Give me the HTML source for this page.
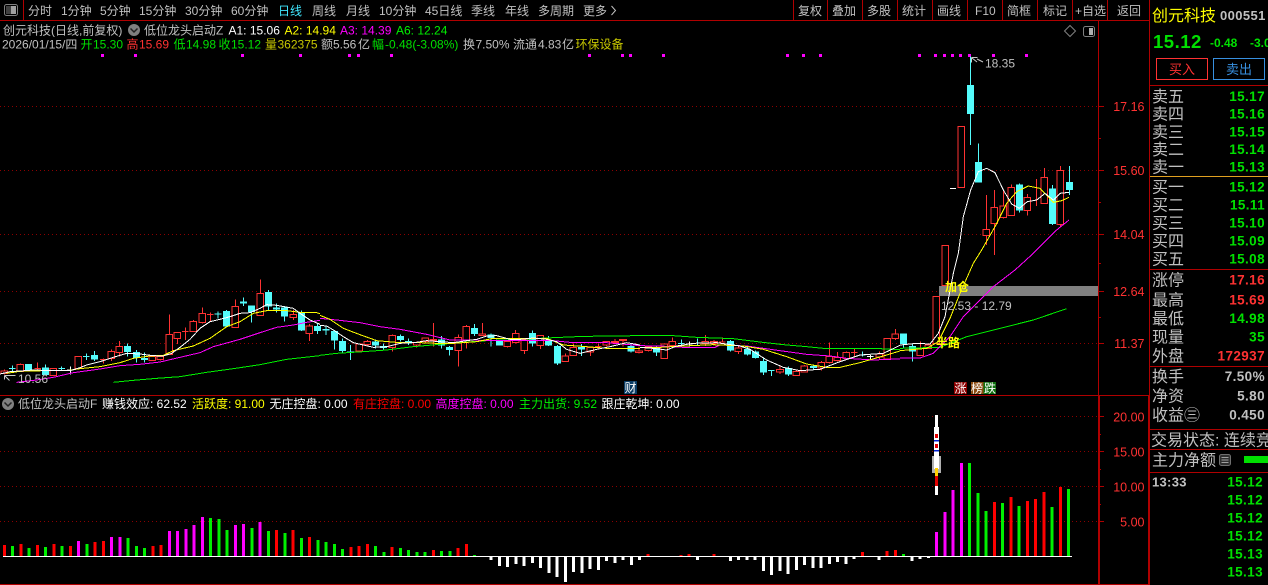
<!DOCTYPE html>
<html><head><meta charset="utf-8"><title>创元科技</title>
<style>
html,body{margin:0;padding:0;background:#000;width:1268px;height:585px;overflow:hidden}
svg{display:block;position:absolute;left:0;top:0}
text{font-family:"Liberation Sans","WenQuanYi Zen Hei","Noto Sans CJK SC",sans-serif;font-size:12px;fill:#c0c0c0;white-space:pre}
.y{fill:#ffff00}.g{fill:#00e000}.r{fill:#ff3232}.m{fill:#ff00ff}.w{fill:#fff}.o{fill:#c8c800}
.pure{fill:#ff0000}.pg{fill:#00f000}
.l{font-size:16px}.v{font-size:13.5px;font-weight:bold;text-anchor:end;letter-spacing:.4px}
.ax{fill:#ff3232;text-anchor:end;font-size:12.5px}
.f{fill:none}
.cr{fill:#000;stroke:#ff3232;stroke-width:3}
.wr{fill:none;stroke:#ff3232;stroke-width:3}
.cb{fill:none;stroke:#54fcfc;stroke-width:21}
.wc{fill:none;stroke:#54fcfc;stroke-width:3}
.ww{fill:none;stroke:#fff;stroke-width:3}
.L{fill:none;stroke-width:3;stroke-linejoin:round}
</style></head><body>
<svg width="1268" height="585" viewBox="0 0 1268 585" xmlns="http://www.w3.org/2000/svg">
<rect width="1268" height="585" fill="#000"/>

<!-- grid -->
<g shape-rendering="crispEdges" stroke="#8c0000" stroke-dasharray="1 3" fill="none">
<path d="M0 106.5H1098M0 170.5H1098M0 234.5H1098M0 291.5H1098M0 343.5H1098M0 416.5H1098M0 451.5H1098M0 486.5H1098M0 521.5H1098"/>
</g>

<!-- magenta dots -->
<path shape-rendering="crispEdges" fill="#ff00ff" d="M101 54h3v3h-3zM134 54h3v3h-3zM241 54h3v3h-3zM299 54h3v3h-3zM348 54h3v3h-3zM357 54h3v3h-3zM390 54h3v3h-3zM588 54h3v3h-3zM621 54h3v3h-3zM629 54h3v3h-3zM662 54h3v3h-3zM786 54h3v3h-3zM802 54h3v3h-3zM819 54h3v3h-3zM918 54h3v3h-3zM934 54h3v3h-3zM943 54h3v3h-3zM951 54h3v3h-3zM959 54h3v3h-3zM968 54h3v3h-3zM992 54h3v3h-3zM1025 54h3v3h-3z"/>

<!-- candles i0-38 -->
<g transform="translate(0,270) scale(.33333)" shape-rendering="crispEdges">
<path class="wr" d="M13 298V313M61 280V283M113 277V298M310 265V280M334 238V273M358 213V260M481 255V272M508 133V255M532 206V222M556 172V210M580 150V186M607 112V160M631 128V155M706 88V174M781 28V138M880 120V150M928 162V213"/>
<path class="cr" d="M3 303h20v8h-20zM51 283h20v22h-20zM103 296h20M150 296h20v21h-20zM225 259h20v37h-20zM300 268h20M324 244h20v22h-20zM348 229h20v19h-20zM447 259h20v13h-20zM471 259h20v9h-20zM498 193h20v60h-20zM522 187h20v19h-20zM546 184h20M570 154h20v30h-20zM597 130h20v27h-20zM621 133h20M696 109h20v63h-20zM771 70h20v67h-20zM870 133h20v10h-20zM918 168h20v23h-20z"/>
<path class="wc" d="M37 286V305M27 296h20M136 283V315M185 290V303M175 296h20M259 250V270M249 259h20M283 243V273M382 220V260M409 240V277M433 247V277M654 124V145M644 132h20M679 120V173M730 82V108M754 106V158M805 60V120M829 100V128M853 108V155M904 122V183M952 160V192"/>
<path class="cb" d="M85 282V303M136 292V315M283 255V268M382 228V246M409 246V264M433 264V270M679 123V170M730 94V101M754 106V126M805 66V110M829 113V118M853 113V140M904 128V182M952 168V183"/>
<path class="ww" d="M211 290V313M201 300h20"/>
</g>

<!-- candles i39-77 -->
<g transform="translate(320,300) scale(.33333)" shape-rendering="crispEdges">
<path class="wr" d="M118 130V155M142 120V138M217 103V155M290 125V143M316 112V127M340 69V140M415 103V200M439 75V145M487 69V108M562 118V142M587 90V130M613 115V162M661 105V147M736 160V186M760 130V168M811 142V168M835 130V145M825 140h20M859 124V140M885 117V134M909 118V140M957 140V160"/>
<path class="cr" d="M108 132h20v21h-20zM132 125h20v9h-20zM207 106h20v37h-20zM280 128h20v7h-20zM306 114h20v10h-20zM330 118h20v4h-20zM405 112h20v39h-20zM429 79h20v41h-20zM477 102h20v4h-20zM552 124h20v16h-20zM577 100h20v28h-20zM603 120h20v31h-20zM651 106h20v30h-20zM726 168h20v17h-20zM750 142h20v24h-20zM801 142h20v14h-20zM849 125h20v10h-20zM875 125h20v3h-20zM899 118h20v4h-20zM947 153h20v5h-20z"/>
<path class="wc" d="M18 80V105M43 90V148M67 115V158M92 135V180M166 118V145M190 130V150M241 103V124M265 115V135M364 108V145M388 138V167M463 72V108M513 100V140M637 92V140M685 108V138M712 135V195M784 132V168M933 130V158"/>
<path class="cb" d="M18 87V92M43 93V122M67 123V153M92 154V159M166 124V137M190 138V144M241 108V120M265 123V130M364 118V137M388 141V150M463 84V102M513 104V114M538 118V136M637 99V131M685 120V137M712 138V191M784 141V149M933 138V155"/>
</g>

<!-- candles i78-112 -->
<g transform="translate(640,310) scale(.33333)" shape-rendering="crispEdges">
<path class="wr" d="M25 108V125M97 82V110M196 75V108M222 90V108M247 82V98M295 110V132M420 168V192M469 178V198M493 165V188M544 153V182M568 97V160M592 126V154M619 125V150M643 117V140M718 125V150M766 57V90M841 94V136M865 100V115"/>
<path class="cr" d="M15 111h20v11h-20zM63 102h20v44h-20zM87 94h20v13h-20zM186 94h20v6h-20zM212 94h20v6h-20zM237 96h20M285 114h20v11h-20zM410 178h20v8h-20zM459 185h20v12h-20zM483 168h20v18h-20zM534 157h20v17h-20zM558 139h20v19h-20zM582 142h20v10h-20zM609 127h20v18h-20zM633 128h20M708 132h20v9h-20zM732 85h20v62h-20zM756 72h20v14h-20zM831 115h20v21h-20zM855 105h20v10h-20z"/>
<path class="wc" d="M49 108V138M124 88V108M114 101h20M172 85V108M271 90V125M322 110V136M346 122V146M370 142V195M394 180V198M384 182h20M445 170V198M520 166V178M667 124V140M657 135h20M790 102V112M817 100V155"/>
<path class="cb" d="M49 112V128M271 93V122M322 117V134M346 124V144M370 153V188M445 174V194M520 168V174M790 70V102M817 108V125"/>
<path class="ww" d="M148 95V110M138 102h20M691 135V147M681 140h20"/>
</g>

<!-- candles i113-129 -->
<g transform="translate(900,230) scale(.33333)" shape-rendering="crispEdges">
<path class="cr" d="M99 199h20v141h-20zM126 46h20v121h-20z"/>
</g>
<g transform="translate(900,50) scale(.33333)" shape-rendering="crispEdges">
<path class="wr" d="M259 435V585M283 420V615M310 422V505M334 403V497M382 432V497M409 387V468M433 354V460M481 348V530"/>
<path class="cr" d="M174 229h20v183h-20zM249 538h20v18h-20zM273 472h20v48h-20zM300 468h20v35h-20zM324 412h20v85h-20zM372 442h20v40h-20zM423 382h20v78h-20zM471 361h20v162h-20z"/>
<path class="wc" d="M211 20V285M235 280V398M358 400V488M457 405V525M508 348V435"/>
<path class="cb" d="M211 105V192M235 336V398M358 403V482M457 415V522M508 396V420"/>
<path class="ww" d="M150 415h18"/>
</g>

<!-- band -->
<rect x="939" y="286" width="159" height="10" fill="#808080" shape-rendering="crispEdges"/>

<!-- MA lines -->
<g transform="translate(0,270) scale(.33333)" shape-rendering="crispEdges">
<polyline class="L" stroke="#00f000" points="340,337 400,331 470,325 540,320 620,307 700,296 780,284 860,268 960,257"/>
<polyline class="L" stroke="#ff00ff" points="50,337 110,330 160,322 220,308 300,297 360,287 420,283 480,276 540,262 600,248 640,230 720,208 780,188 830,172 880,165 920,157 960,151"/>
<polyline class="L" stroke="#ffff00" points="20,310 60,304 130,302 200,302 240,296 300,290 360,278 400,265 450,258 490,256 520,242 580,228 630,205 680,170 720,155 760,130 800,122 860,122 900,127 950,128 960,131"/>
<polyline class="L" stroke="#ffffff" points="0,312 30,305 60,303 100,300 160,302 210,302 240,293 260,285 300,275 340,262 380,250 420,252 460,257 490,258 515,250 540,232 570,208 600,175 630,155 660,148 690,140 720,130 750,128 780,115 800,104 830,106 880,115 900,130 930,150 960,163"/>
</g>
<g transform="translate(320,300) scale(.33333)" shape-rendering="crispEdges">
<polyline class="L" stroke="#00f000" points="0,166 50,160 130,155 200,150 280,140 360,133 430,127 500,122 600,118 700,113 770,110 850,108 960,107"/>
<polyline class="L" stroke="#ff00ff" points="0,55 50,60 120,68 180,80 240,88 320,103 390,120 440,120 530,122 620,122 700,122 760,128 860,128 960,137"/>
<polyline class="L" stroke="#ffff00" points="0,46 30,58 70,85 120,104 170,122 240,128 300,128 350,130 400,130 470,125 520,115 590,115 680,115 730,135 800,140 860,145 930,145 960,145"/>
<polyline class="L" stroke="#ffffff" points="0,76 20,78 40,90 70,110 100,128 130,135 160,142 200,140 240,130 290,127 320,122 360,125 400,128 440,122 470,118 500,108 530,107 570,118 600,118 640,114 680,118 710,125 740,148 780,160 830,148 870,140 920,128 960,135"/>
</g>
<g transform="translate(640,310) scale(.33333)" shape-rendering="crispEdges">
<polyline class="L" stroke="#00f000" points="0,76 100,77 170,82 280,86 360,96 430,104 500,110 550,115 700,115 760,118 780,118"/>
<polyline class="L" stroke="#ff00ff" points="0,107 60,108 130,112 225,112 240,105 320,108 420,122 500,133 570,138 620,145 700,150 770,147 780,147"/>
<polyline class="L" stroke="#ffff00" points="0,112 60,112 130,108 220,104 310,108 370,118 440,140 500,162 560,172 600,172 660,158 740,135 780,123"/>
<polyline class="L" stroke="#ffffff" points="0,112 40,115 80,120 110,108 160,100 230,98 300,108 330,118 380,150 430,172 480,182 540,178 600,155 660,135 730,130 780,106"/>
</g>
<g transform="translate(900,230) scale(.33333)" shape-rendering="crispEdges">
<polyline class="L" stroke="#00f000" points="0,355 120,352 200,320 300,295 400,270 500,236"/>
<polyline class="L" stroke="#ff00ff" points="0,384 60,384 100,370 150,320 190,260 280,170 345,120 400,70"/>
<polyline class="L" stroke="#ffff00" points="0,362 80,355 115,335 150,265 180,190 220,100 245,60"/>
<polyline class="L" stroke="#ffffff" points="0,345 50,340 90,342 115,310 135,260 160,130 175,70"/>
</g>
<g transform="translate(900,50) scale(.33333)" shape-rendering="crispEdges">
<polyline class="L" stroke="#ff00ff" points="400,610 470,540 507,510"/>
<polyline class="L" stroke="#ffff00" points="245,600 285,530 320,460 350,425 385,408 420,415 460,457 485,452 507,442"/>
<polyline class="L" stroke="#ffffff" points="175,610 190,500 212,420 235,365 260,355 285,368 310,420 335,462 358,475 382,455 410,450 435,430 460,450 480,430 507,427"/>
</g>

<!-- chart labels -->
<path fill="none" stroke="#c8c8c8" d="M971.5 57.5h6M971.5 57.5v5M972 58l5 4M977 59l6 3"/>
<text x="985" y="67.5">18.35</text>
<path fill="none" stroke="#c8c8c8" d="M4.5 375.5h11M4.5 375.5v4M4.5 375.5l5 5"/>
<text x="18" y="383">10.56</text>
<text x="945" y="291" class="y" style="font-size:12px;font-weight:bold">加仓</text>
<text x="941" y="310">12.53 - 12.79</text>
<text x="936" y="347" class="y" style="font-size:12px;font-weight:bold">半路</text>
<rect x="624" y="381" width="13" height="13" fill="#0a3c64"/><text x="624.5" y="392" class="w">财</text>
<rect x="954" y="382" width="13" height="12" fill="#8b0000"/><text x="954.5" y="392.5" class="w">涨</text>
<rect x="971" y="382" width="12.5" height="12" fill="#8b4a10"/><text x="971" y="392.5" class="w">榜</text>
<rect x="983.5" y="382" width="12.5" height="12" fill="#107010"/><text x="984" y="392.5" class="w">跌</text>

<!-- lower bars -->
<g transform="translate(0,390) scale(1,.33333)" fill="none" stroke-width="3" shape-rendering="crispEdges">
<path stroke="#ff0000" d="M4.3 498V465M20.8 498V462M37.3 498V465M53.8 498V462M70.3 498V468M95 498V456M103.3 498V453M152.8 498V468M161 498V465M276.5 498V420M293 498V420M309.5 498V441M350.8 498V471M359 498V468M367.3 498V462M392 498V471M433.3 498V480M458 498V474M466.3 498V462"/>
<path stroke="#00f000" d="M12.5 498V468M29 498V474M45.5 498V471M62 498V468M86.8 498V462M128 498V444M136.3 498V468M144.5 498V474M210.5 498V384M218.8 498V387M227 498V420M251.8 498V414M268.3 498V423M284.8 498V429M301.3 498V444M317.8 498V450M326 498V456M334.3 498V462M342.5 498V477M375.5 498V468M383.8 498V486M400.3 498V474M408.5 498V480M416.8 498V486M425 498V486M441.5 498V483M449.8 498V483M474.5 498V495"/>
<path stroke="#ff00ff" d="M78.5 498V453M111.5 498V441M119.8 498V441M169.3 498V423M177.5 498V423M185.8 498V417M194 498V405M202.3 498V381M235.3 498V405M243.5 498V402M260 498V396"/>
<path stroke="#ffffff" d="M491 498V510M499.3 498V528M507.5 498V531M515.8 498V522M524 498V528M532.3 498V519M540.5 498V534M548.8 498V549M557 498V561"/>
</g>
<g transform="translate(0,400) scale(1,.33333)" fill="none" stroke-width="3" shape-rendering="crispEdges">
<path stroke="#ffffff" d="M565.3 468V546M573.5 468V516M581.8 468V519M590 468V507M598.3 468V510M606.5 468V483M614.8 468V489M623 468V480M631.3 468V495M639.5 468V480M697.3 468V480M730.3 468V483M738.5 468V480M746.8 468V480M755 468V480M763.3 468V513M771.5 468V525M779.8 468V513M788 468V522M796.3 468V510M804.5 468V495M812.8 468V504M821 468V504M829.3 468V492M837.5 468V486M845.8 468V492M854 468V477M878.8 468V480M911.8 468V483M920 468V477M928.3 468V474"/>
<path stroke="#ff0000" d="M647.8 468V462M680.8 468V465M689 468V462M713.8 468V462M862.3 468V456M887 468V453M895.3 468V450M994.3 468V306M1010.8 468V291M1027.3 468V303M1035.5 468V297M1043.8 468V276M1060.3 468V261"/>
<path stroke="#00f000" d="M903.5 468V462M969.5 468V189M977.8 468V279M986 468V333M1002.5 468V309M1019 468V318M1052 468V321M1068.5 468V267"/>
<path stroke="#ff00ff" d="M936.5 468V396M944.8 468V336M953 468V270M961.3 468V189"/>
</g>
<rect x="3" y="556" width="1069" height="1" fill="#fff" shape-rendering="crispEdges"/>

<!-- rocket -->
<g shape-rendering="crispEdges">
<rect x="935" y="415" width="3" height="80" fill="#fff"/>
<rect x="932" y="456" width="9" height="17" fill="#b0b0b0"/>
<rect x="934" y="427" width="5" height="42" fill="#fff"/>
<rect x="935" y="434" width="3" height="4" fill="#e00000"/>
<rect x="934" y="440" width="5" height="1.5" fill="#0020d0"/>
<rect x="935" y="444" width="3" height="4" fill="#e00000"/>
<rect x="934" y="450" width="5" height="1.5" fill="#0020d0"/>
<rect x="935" y="468" width="3" height="8" fill="#ffd000"/>
<rect x="935" y="476" width="3" height="10" fill="#e00000"/>
</g>

<!-- frame lines -->
<g shape-rendering="crispEdges" fill="#b00000">
<rect x="0" y="20" width="1150" height="1"/>
<rect x="23" y="0" width="1" height="20"/>
<rect x="793" y="0" width="1" height="20"/><rect x="827" y="0" width="1" height="20"/><rect x="862" y="0" width="1" height="20"/><rect x="897" y="0" width="1" height="20"/><rect x="932" y="0" width="1" height="20"/><rect x="967" y="0" width="1" height="20"/><rect x="1002" y="0" width="1" height="20"/><rect x="1037" y="0" width="1" height="20"/><rect x="1072" y="0" width="1" height="20"/><rect x="1107" y="0" width="1" height="20"/>
<rect x="1098" y="21" width="1" height="374"/>
<rect x="1098" y="395" width="2" height="190"/>
<rect x="0" y="395" width="1150" height="1"/>
<rect x="0" y="584" width="1150" height="1"/>
<rect x="1149" y="0" width="1" height="395"/>
<rect x="1148" y="395" width="2" height="190"/>
<rect x="1150" y="85" width="118" height="1"/>
<rect x="1150" y="269" width="118" height="1"/>
<rect x="1150" y="366" width="118" height="1"/>
<rect x="1150" y="429" width="118" height="1"/>
<rect x="1150" y="449" width="118" height="1"/>
<rect x="1150" y="472" width="118" height="1"/>
<rect x="1150" y="176" width="118" height="1" fill="#e0a020"/>
<!-- ticks -->
<path fill="none" stroke="#b00000" d="M1099 106.5h5M1099 170.5h5M1099 234.5h5M1099 291.5h5M1099 343.5h5M1099 138.5h2M1099 202.5h2M1099 263.5h2M1099 317.5h2M1099 416.5h5M1099 451.5h5M1099 486.5h5M1099 521.5h5M1099 434.5h2M1099 469.5h2M1099 504.5h2"/>
</g>

<!-- axis labels -->
<text class="ax" x="1144.5" y="111">17.16</text>
<text class="ax" x="1144.5" y="175">15.60</text>
<text class="ax" x="1144.5" y="239">14.04</text>
<text class="ax" x="1144.5" y="296">12.64</text>
<text class="ax" x="1144.5" y="348">11.37</text>
<text class="ax" x="1144.5" y="421.5">20.00</text>
<text class="ax" x="1144.5" y="456.5">15.00</text>
<text class="ax" x="1144.5" y="491.5">10.00</text>
<text class="ax" x="1144.5" y="526.5">5.00</text>

<!-- toolbar -->
<rect x="4.5" y="4.5" width="13" height="11" rx="2" fill="none" stroke="#808080"/><rect x="11" y="6" width="5" height="8" fill="#a0a0a0"/><rect x="6" y="6" width="5" height="8" fill="#404040"/>
<text x="28" y="15">分时</text><text x="61" y="15">1分钟</text><text x="100" y="15">5分钟</text><text x="139" y="15">15分钟</text><text x="185" y="15">30分钟</text><text x="231" y="15">60分钟</text>
<text x="278" y="15" style="fill:#40e8ff">日线</text>
<text x="312" y="15">周线</text><text x="346" y="15">月线</text><text x="379" y="15">10分钟</text><text x="425" y="15">45日线</text><text x="471" y="15">季线</text><text x="505" y="15">年线</text><text x="538" y="15">多周期</text><text x="583" y="15">更多</text>
<path fill="none" stroke="#c0c0c0" d="M611.5 6l4 4.5-4 4.5"/>
<text x="798" y="15">复权</text><text x="832" y="15">叠加</text><text x="867" y="15">多股</text><text x="902" y="15">统计</text><text x="937" y="15">画线</text><text x="975" y="15">F10</text><text x="1007" y="15">简框</text><text x="1043" y="15">标记</text><text x="1075" y="15">+自选</text><text x="1117" y="15">返回</text>

<!-- info line 1 -->
<text x="3" y="34.5">创元科技(日线,前复权)</text>
<circle cx="134" cy="30" r="6" fill="#808080"/><path d="M130.5 28.5l3.5 3.5 3.5-3.5" fill="none" stroke="#222" stroke-width="1.5"/>
<text x="144" y="34.5">低位龙头启动Z</text>
<text x="228.5" y="34.5" class="w">A1: 15.06</text>
<text x="284.5" y="34.5" class="y">A2: 14.94</text>
<text x="340" y="34.5" class="m">A3: 14.39</text>
<text x="396" y="34.5" class="pg">A6: 12.24</text>

<!-- info line 2 -->
<text x="2" y="48.5">2026/01/15/四</text>
<text x="80.5" y="48.5" class="g">开</text><text x="93" y="48.5" class="g">15.30</text>
<text x="126.5" y="48.5" class="r">高</text><text x="139" y="48.5" class="r">15.69</text>
<text x="173.5" y="48.5" class="g">低</text><text x="186" y="48.5" class="g">14.98</text>
<text x="218.5" y="48.5" class="g">收</text><text x="231" y="48.5" class="g">15.12</text>
<text x="265" y="48.5" class="o">量</text><text x="277.5" y="48.5" class="o">362375</text>
<text x="321" y="48.5">额</text><text x="333" y="48.5">5.56</text><text x="358" y="48.5">亿</text>
<text x="372" y="48.5" class="g">幅</text><text x="385" y="48.5" class="g">-0.48(-3.08%)</text>
<text x="463" y="48.5">换</text><text x="475.5" y="48.5">7.50%</text>
<text x="513" y="48.5">流通</text><text x="538" y="48.5">4.83</text><text x="562" y="48.5">亿</text>
<text x="575.5" y="48.5" class="o">环保设备</text>

<!-- chart corner icons -->
<path fill="none" stroke="#808080" d="M1070 25.5l5.5 5.5-5.5 5.5-5.5-5.5z"/>
<rect x="1083.5" y="26.5" width="11" height="10" rx="2" fill="none" stroke="#808080"/><rect x="1089" y="28" width="4" height="7" fill="#b0b0b0"/>

<!-- lower title -->
<circle cx="8" cy="404" r="6" fill="#808080"/><path d="M4.5 402.5l3.5 3.5 3.5-3.5" fill="none" stroke="#222" stroke-width="1.5"/>
<text x="18" y="408">低位龙头启动F</text>
<text x="102" y="408" class="w">赚钱效应: 62.52</text>
<text x="192" y="408" class="y">活跃度: 91.00</text>
<text x="269.5" y="408" class="w">无庄控盘: 0.00</text>
<text x="353" y="408" class="pure">有庄控盘: 0.00</text>
<text x="435.5" y="408" class="m">高度控盘: 0.00</text>
<text x="519" y="408" class="pg">主力出货: 9.52</text>
<text x="601.5" y="408" class="w">跟庄乾坤: 0.00</text>

<!-- right panel head -->
<text x="1152" y="21" class="y" style="font-size:16px">创元科技</text>
<text x="1220" y="20" style="font-size:13px;font-weight:bold;letter-spacing:.4px">000551</text>
<text x="1153" y="48" style="font-size:18.5px;font-weight:bold;fill:#00e000;letter-spacing:.5px">15.12</text>
<text x="1210" y="47" style="font-weight:bold;fill:#00e000;font-size:12px">-0.48</text>
<text x="1250" y="47" style="font-weight:bold;fill:#00e000;font-size:12px">-3.08%</text>
<rect x="1156.5" y="58.5" width="51" height="21" fill="none" stroke="#ff3232"/>
<text x="1169" y="74" class="r" style="font-size:13px">买入</text>
<rect x="1213.5" y="58.5" width="51" height="21" fill="none" stroke="#3890e0"/>
<text x="1226" y="74" style="font-size:13px;fill:#3890e0">卖出</text>

<!-- order book -->
<text class="l" x="1152" y="102">卖五</text><text class="v g" x="1265" y="101">15.17</text>
<text class="l" x="1152" y="119.5">卖四</text><text class="v g" x="1265" y="118.5">15.16</text>
<text class="l" x="1152" y="137.5">卖三</text><text class="v g" x="1265" y="136.5">15.15</text>
<text class="l" x="1152" y="155">卖二</text><text class="v g" x="1265" y="154">15.14</text>
<text class="l" x="1152" y="172.5">卖一</text><text class="v g" x="1265" y="171.5">15.13</text>
<text class="l" x="1152" y="192.5">买一</text><text class="v g" x="1265" y="191.5">15.12</text>
<text class="l" x="1152" y="210.5">买二</text><text class="v g" x="1265" y="209.5">15.11</text>
<text class="l" x="1152" y="228.5">买三</text><text class="v g" x="1265" y="227.5">15.10</text>
<text class="l" x="1152" y="246.5">买四</text><text class="v g" x="1265" y="245.5">15.09</text>
<text class="l" x="1152" y="264.5">买五</text><text class="v g" x="1265" y="263.5">15.08</text>
<text class="l" x="1152" y="285.5">涨停</text><text class="v r" x="1265" y="284.5">17.16</text>
<text class="l" x="1152" y="305.5">最高</text><text class="v r" x="1265" y="304.5">15.69</text>
<text class="l" x="1152" y="324">最低</text><text class="v g" x="1265" y="323">14.98</text>
<text class="l" x="1152" y="342.5">现量</text><text class="v g" x="1265" y="341.5">35</text>
<text class="l" x="1152" y="361.5">外盘</text><text class="v r" x="1265" y="360.5">172937</text>
<text class="l" x="1152" y="382">换手</text><text class="v" x="1265" y="381">7.50%</text>
<text class="l" x="1152" y="401.5">净资</text><text class="v" x="1265" y="400.5">5.80</text>
<text class="l" x="1152" y="420.5">收益㊂</text><text class="v" x="1265" y="419.5">0.450</text>
<text class="l" x="1151" y="445.5">交易状态: 连续竞</text>
<text class="l" x="1152" y="465.5">主力净额</text>
<rect x="1219.5" y="454.5" width="11" height="11" rx="2" fill="#303030" stroke="#707070"/><path d="M1221.5 457.5h7M1221.5 460h7M1221.5 462.5h7" stroke="#a0a0a0"/>
<rect x="1244" y="456" width="24" height="7" fill="#00e000"/>

<!-- ticks -->
<text x="1152" y="486.5" style="font-size:13px;font-weight:bold;letter-spacing:.3px">13:33</text>
<text class="v g" x="1263" y="486.5">15.12</text>
<text class="v g" x="1263" y="504.5">15.12</text>
<text class="v g" x="1263" y="522.5">15.12</text>
<text class="v g" x="1263" y="540.5">15.12</text>
<text class="v g" x="1263" y="558.5">15.13</text>
<text class="v g" x="1263" y="576.5">15.13</text>
</svg>
</body></html>
